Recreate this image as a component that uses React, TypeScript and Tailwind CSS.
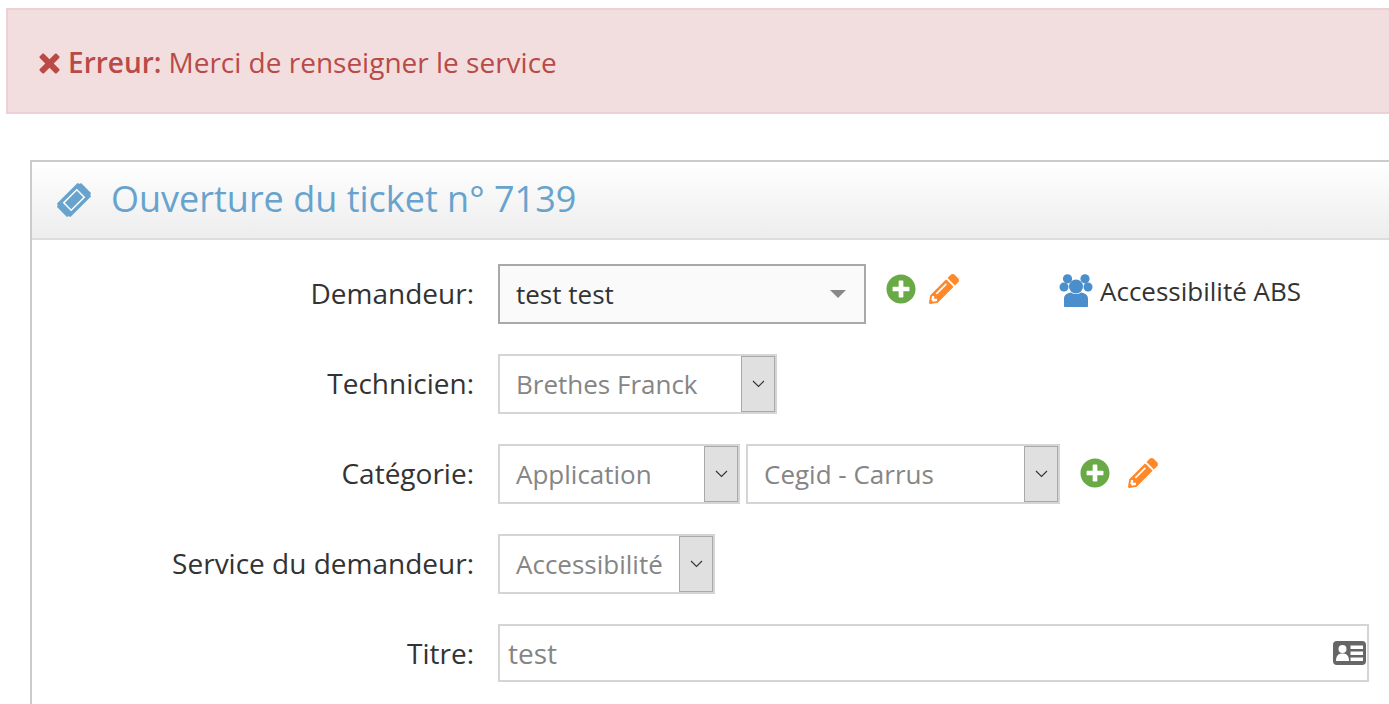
import { FaPlusCircle, FaPencilAlt } from 'react-icons/fa';

const Chevron = () => (
  <svg width="13" height="8" viewBox="0 0 13 8" fill="none" stroke="#333" strokeWidth="1.1">
    <path d="M1 1l5.500 5.500L12 1" />
  </svg>
);

const CrossIcon = () => (
  <svg width="21" height="21" viewBox="0 0 21 21" fill="#b94a48">
    <path d="M5 .8L10.500 6.300 16 .8c.5-.5 1.200-.5 1.700 0l2.500 2.500c.5.500.5 1.200 0 1.700L14.700 10.500l5.500 5.500c.5.500.5 1.200 0 1.700l-2.500 2.500c-.5.500-1.200.5-1.700 0l-5.500-5.500L5 20.200c-.5.500-1.200.5-1.700 0L.8 17.700c-.5-.5-.5-1.200 0-1.700l5.500-5.500L.8 5c-.5-.5-.5-1.200 0-1.700L3.300.8C3.800.3 4.500.3 5 .8z" />
  </svg>
);

const TicketIcon = () => (
  <svg width="36" height="36" viewBox="0 0 36 36">
    <g transform="rotate(-45 18 18)">
      <path
        d="M3.500 8.500h29a3 3 0 0 0 2.500 2.500v14a3 3 0 0 0-2.500 2.500h-29A3 3 0 0 0 1 25V11a3 3 0 0 0 2.500-2.500z"
        fill="#67a3cd"
      />
      <rect x="8" y="12" width="20" height="12" fill="#fff" />
      <rect x="9.500" y="13.500" width="17" height="9" fill="#67a3cd" />
    </g>
  </svg>
);

const UsersIcon = () => (
  <svg width="34" height="33" viewBox="0 0 34 33" fill="#4a8ecb">
    <circle cx="8.500" cy="4.800" r="4.600" />
    <circle cx="26" cy="4.800" r="4.600" />
    <circle cx="5" cy="13" r="4.500" />
    <circle cx="29" cy="13" r="4.500" />
    <circle cx="17" cy="12.500" r="7" />
    <path d="M5 32V25c0-4 3-6 7-6.500 3 2 7 2 10 0 4 .5 7 2.500 7 6.500v7c0 .6-.5 1-1 1H6c-.5 0-1-.4-1-1z" />
  </svg>
);

const IdCardIcon = () => (
  <svg width="33" height="24" viewBox="0 0 33 24">
    <rect width="33" height="24" rx="4" fill="#666" />
    <circle cx="9.500" cy="8" r="4" fill="#fff" />
    <path d="M3 20c0-5 2-7.500 6.500-7.500S16 15 16 20z" fill="#fff" />
    <path d="M17.500 4.500H30V8H17.500zM17.500 10.500H30V14H17.500zM17.500 16.500H30V20H17.500z" fill="#fff" />
  </svg>
);

const NativeSelect = ({ value, width }: { value: string; width: string }) => (
  <div className={`${width} h-[60px] flex border-2 border-[#d5d5d5] bg-white`}>
    <span className="flex-1 pl-[16px] leading-[56px] text-[26px] text-[#858585] whitespace-nowrap">{value}</span>
    <span className="w-[34px] flex items-center justify-center bg-[#e0e0e0] border border-[#a9a9a9]">
      <Chevron />
    </span>
  </div>
);

const Row = ({ label, children, height = 'min-h-[60px]' }: { label: string; children: React.ReactNode; height?: string }) => (
  <div className={`flex items-start ${height}`}>
    <label className="w-[442px] text-right leading-[58px] text-[28px] text-[#333] shrink-0">{label}</label>
    <div className="ml-[24px] flex-1 flex items-start">{children}</div>
  </div>
);

export default function App() {
  return (
    <div className="h-screen overflow-hidden bg-white font-['Open_Sans',sans-serif] text-[26px] pt-2 pl-[6px]">
      <div className="h-[106px] mr-[-10px] flex items-center pl-[31px] pt-[2px] border-2 border-[#ecd0d4] bg-[#f2dede] text-[#b94a48] text-[28px]">
        <span className="mr-[8px] mt-[2px]">
          <CrossIcon />
        </span>
        <span className="font-semibold mr-[7px]">Erreur:</span>
        <span>Merci de renseigner le service</span>
      </div>

      <div className="mt-[46px] ml-[24px] mr-[-10px] border-l-2 border-t-2 border-[#cccccc] h-[700px]">
        <div className="h-[78px] flex items-center pl-[24px] border-b-2 border-[#dddddd] bg-gradient-to-b from-white to-[#ededed]">
          <TicketIcon />
          <h1 className="ml-[19px] mb-[2px] text-[36px] leading-none text-[#67a3cd]">Ouverture du ticket n° 7139</h1>
        </div>

        <div className="pt-[24px] flex flex-col gap-[30px]">
          <Row label="Demandeur:">
            <div className="w-[368px] h-[60px] flex items-center justify-between pl-[16px] pr-[18px] border-2 border-[#a9a9a9] bg-[#fafafa] text-[#333]">
              <span>test test</span>
              <span className="w-0 h-0 border-x-[8px] border-x-transparent border-t-[8px] border-t-[#888888]" />
            </div>
            <FaPlusCircle className="ml-[20px] mt-[10px] w-[30px] h-[30px] text-[#69aa46]" />
            <FaPencilAlt className="ml-[13px] mt-[10px] w-[30px] h-[30px] text-[#ff892a]" />
            <div className="ml-[100px] mt-[10px] flex items-start">
              <UsersIcon />
              <span className="ml-[7px] leading-[34px] text-[26px] text-[#333] whitespace-nowrap">Accessibilité ABS</span>
            </div>
          </Row>

          <Row label="Technicien:">
            <NativeSelect value="Brethes Franck" width="w-[279px]" />
          </Row>

          <Row label="Catégorie:">
            <NativeSelect value="Application" width="w-[242px]" />
            <div className="ml-[6px]">
              <NativeSelect value="Cegid - Carrus" width="w-[314px]" />
            </div>
            <FaPlusCircle className="ml-[20px] mt-[14px] w-[30px] h-[30px] text-[#69aa46]" />
            <FaPencilAlt className="ml-[18px] mt-[14px] w-[30px] h-[30px] text-[#ff892a]" />
          </Row>

          <Row label="Service du demandeur:">
            <NativeSelect value="Accessibilité" width="w-[217px]" />
          </Row>

          <Row label="Titre:" height="min-h-[58px]">
            <div className="w-[871px] h-[58px] flex items-center justify-between pl-[8px] pr-[1px] border-2 border-[#d5d5d5] bg-white text-[28px] text-[#858585]">
              <span>test</span>
              <IdCardIcon />
            </div>
          </Row>
        </div>
      </div>
    </div>
  );
}
